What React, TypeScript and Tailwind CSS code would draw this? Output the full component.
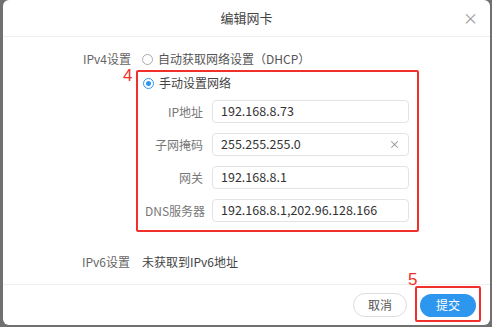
import React from "react";

const font = { fontFamily: '"Noto Sans CJK SC", "Noto Sans", sans-serif' };

function Field({ label, value, clear }: { label: string; value: string; clear?: boolean }) {
  return (
    <div className="flex items-center h-[23px]">
      <div className="w-[67px] text-right text-[12px] text-[#777] pr-[9px] whitespace-nowrap">{label}</div>
      <div className="w-[197px] h-[23px] border border-[#e3e3e3] rounded-[4px] flex items-center px-[8px] text-[12.5px] text-[#333]">
        <span className="flex-1">{value}</span>
        {clear && <span className="text-[#888] text-[11px] leading-none">×</span>}
      </div>
    </div>
  );
}

function Radio({ checked }: { checked?: boolean }) {
  return checked ? (
    <span className="w-[11px] h-[11px] rounded-full border border-[#2f95ee] flex items-center justify-center">
      <span className="w-[5px] h-[5px] rounded-full bg-[#2f95ee]" />
    </span>
  ) : (
    <span className="w-[11px] h-[11px] rounded-full border border-[#aaa]" />
  );
}

export default function App() {
  return (
    <div className="w-[492px] h-[327px] bg-[#707070] relative overflow-hidden" style={font}>
      <div className="absolute left-[3px] top-0 w-[487px] h-[325px] bg-white rounded-[6px] flex flex-col">
        <div className="h-[37px] border-b border-[#eeeeee] flex items-center justify-center relative shrink-0">
          <span className="text-[13px] text-[#444]">编辑网卡</span>
          <span className="absolute right-[12px] top-[10px] text-[15px] text-[#999] leading-none">×</span>
        </div>
        <div className="flex-1 flex flex-col pt-[14px]">
          <div className="flex items-center h-[16px] leading-[16px]">
            <div className="w-[139px] text-right text-[12px] text-[#666] pr-[11px]">IPv4设置</div>
            <Radio />
            <span className="ml-[5px] text-[12px] text-[#555]">自动获取网络设置（DHCP）</span>
          </div>
          <div className="flex items-center h-[18px] mt-[7px] pl-[140px]">
            <Radio checked />
            <span className="ml-[5px] text-[12px] text-[#444]">手动设置网络</span>
          </div>
          <div className="flex flex-col gap-[10px] mt-[8px] pl-[142px]">
            <Field label="IP地址" value="192.168.8.73" />
            <Field label="子网掩码" value="255.255.255.0" clear />
            <Field label="网关" value="192.168.8.1" />
            <Field label="DNS服务器" value="192.168.8.1,202.96.128.166" />
          </div>
          <div className="flex items-center h-[18px] mt-[31px]">
            <div className="w-[139px] text-right text-[12px] text-[#666] pr-[12px]">IPv6设置</div>
            <span className="text-[12px] text-[#444]">未获取到IPv6地址</span>
          </div>
        </div>
        <div className="h-[41px] border-t border-[#eeeeee] flex items-center justify-end pr-[14px] gap-[13px] shrink-0">
          <button className="w-[54px] h-[24px] rounded-full border border-[#dddddd] text-[12px] text-[#555] bg-white">取消</button>
          <button className="w-[56px] h-[23px] rounded-full bg-[#2d96ee] text-[12px] text-white">提交</button>
        </div>
      </div>
      {/* annotations */}
      <div className="absolute left-[136px] top-[70px] w-[283px] h-[162px] border-2 border-[#f0302a] rounded-[2px]" />
      <div className="absolute left-[123px] top-[67px] text-[17px] text-[#f0302a] leading-none" style={{ fontFamily: '"Liberation Sans", sans-serif' }}>4</div>
      <div className="absolute left-[415px] top-[286px] w-[66px] h-[36px] border-2 border-[#f0302a] rounded-[2px]" />
      <div className="absolute left-[408px] top-[271px] text-[17px] text-[#f0302a] leading-none" style={{ fontFamily: '"Liberation Sans", sans-serif' }}>5</div>
    </div>
  );
}
